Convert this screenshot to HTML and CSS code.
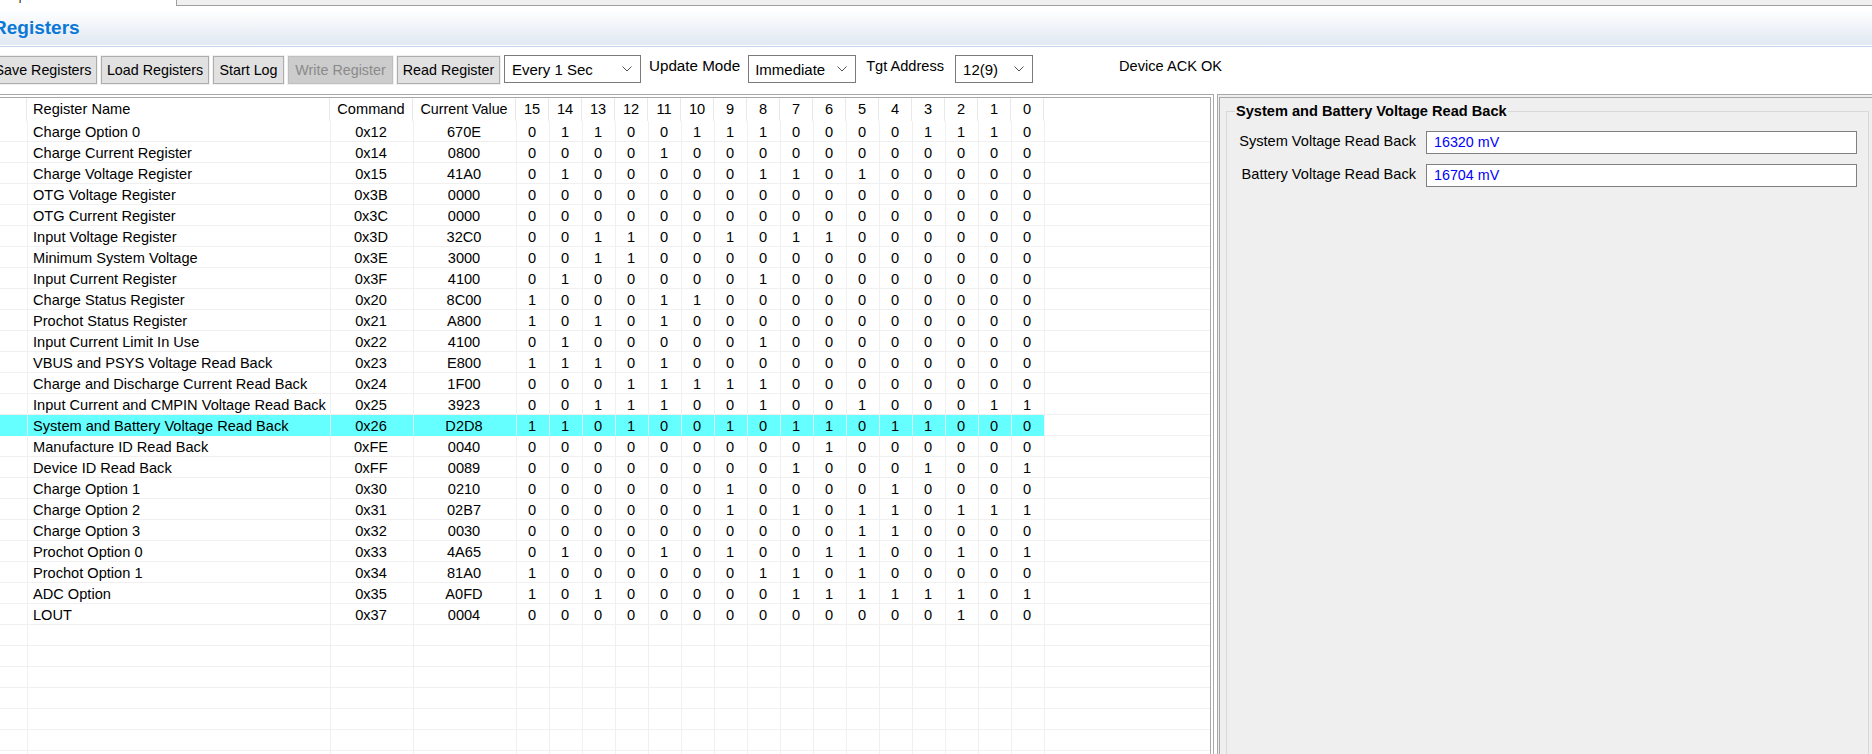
FILE: index.html
```html
<!DOCTYPE html>
<html lang="en">
<head>
<meta charset="utf-8">
<title>Registers</title>
<link rel="stylesheet" href="styles.css">
</head>
<body>
<div class="tabstrip"><div class="tab"><span class="tab-mark"></span></div><div class="tab-rest"></div></div>
<header class="titlebar"><h1 class="title">Registers</h1></header>
<div class="toolbar">
  <button class="btn btn-save">Save Registers</button>
  <button class="btn btn-load">Load Registers</button>
  <button class="btn btn-log">Start Log</button>
  <button class="btn btn-write" disabled>Write Register</button>
  <button class="btn btn-read">Read Register</button>
  <div class="combo combo-rate"><span>Every 1 Sec</span><svg class="chev" viewBox="0 0 10 6"><path d="M.5.5 5 5 9.500.5"/></svg></div>
  <span class="tlabel lbl-mode">Update Mode</span>
  <div class="combo combo-mode"><span>Immediate</span><svg class="chev" viewBox="0 0 10 6"><path d="M.5.5 5 5 9.500.5"/></svg></div>
  <span class="tlabel lbl-addr">Tgt Address</span>
  <div class="combo combo-addr"><span>12(9)</span><svg class="chev" viewBox="0 0 10 6"><path d="M.5.5 5 5 9.500.5"/></svg></div>
  <span class="tlabel lbl-status">Device ACK OK</span>
</div>
<main class="panes">
  <section class="grid-pane">
    <table class="grid">
      <colgroup><col class="c-idx"><col class="c-name"><col class="c-cmd"><col class="c-val"><col class="c-bit"><col class="c-bit"><col class="c-bit"><col class="c-bit"><col class="c-bit"><col class="c-bit"><col class="c-bit"><col class="c-bit"><col class="c-bit"><col class="c-bit"><col class="c-bit"><col class="c-bit"><col class="c-bit"><col class="c-bit"><col class="c-bit"><col class="c-bit"><col></colgroup>
      <thead><tr><th><th class="name">Register Name<th>Command<th class="val-head">Current Value<th>15<th>14<th>13<th>12<th>11<th>10<th>9<th>8<th>7<th>6<th>5<th>4<th>3<th>2<th>1<th>0<th class="fill"></tr></thead>
      <tbody>
        <tr><td><td class="name">Charge Option 0<td>0x12<td>670E<td>0<td>1<td>1<td>0<td>0<td>1<td>1<td>1<td>0<td>0<td>0<td>0<td>1<td>1<td>1<td>0<td class="fill"></tr>
        <tr><td><td class="name">Charge Current Register<td>0x14<td>0800<td>0<td>0<td>0<td>0<td>1<td>0<td>0<td>0<td>0<td>0<td>0<td>0<td>0<td>0<td>0<td>0<td class="fill"></tr>
        <tr><td><td class="name">Charge Voltage Register<td>0x15<td>41A0<td>0<td>1<td>0<td>0<td>0<td>0<td>0<td>1<td>1<td>0<td>1<td>0<td>0<td>0<td>0<td>0<td class="fill"></tr>
        <tr><td><td class="name">OTG Voltage Register<td>0x3B<td>0000<td>0<td>0<td>0<td>0<td>0<td>0<td>0<td>0<td>0<td>0<td>0<td>0<td>0<td>0<td>0<td>0<td class="fill"></tr>
        <tr><td><td class="name">OTG Current Register<td>0x3C<td>0000<td>0<td>0<td>0<td>0<td>0<td>0<td>0<td>0<td>0<td>0<td>0<td>0<td>0<td>0<td>0<td>0<td class="fill"></tr>
        <tr><td><td class="name">Input Voltage Register<td>0x3D<td>32C0<td>0<td>0<td>1<td>1<td>0<td>0<td>1<td>0<td>1<td>1<td>0<td>0<td>0<td>0<td>0<td>0<td class="fill"></tr>
        <tr><td><td class="name">Minimum System Voltage<td>0x3E<td>3000<td>0<td>0<td>1<td>1<td>0<td>0<td>0<td>0<td>0<td>0<td>0<td>0<td>0<td>0<td>0<td>0<td class="fill"></tr>
        <tr><td><td class="name">Input Current Register<td>0x3F<td>4100<td>0<td>1<td>0<td>0<td>0<td>0<td>0<td>1<td>0<td>0<td>0<td>0<td>0<td>0<td>0<td>0<td class="fill"></tr>
        <tr><td><td class="name">Charge Status Register<td>0x20<td>8C00<td>1<td>0<td>0<td>0<td>1<td>1<td>0<td>0<td>0<td>0<td>0<td>0<td>0<td>0<td>0<td>0<td class="fill"></tr>
        <tr><td><td class="name">Prochot Status Register<td>0x21<td>A800<td>1<td>0<td>1<td>0<td>1<td>0<td>0<td>0<td>0<td>0<td>0<td>0<td>0<td>0<td>0<td>0<td class="fill"></tr>
        <tr><td><td class="name">Input Current Limit In Use<td>0x22<td>4100<td>0<td>1<td>0<td>0<td>0<td>0<td>0<td>1<td>0<td>0<td>0<td>0<td>0<td>0<td>0<td>0<td class="fill"></tr>
        <tr><td><td class="name">VBUS and PSYS Voltage Read Back<td>0x23<td>E800<td>1<td>1<td>1<td>0<td>1<td>0<td>0<td>0<td>0<td>0<td>0<td>0<td>0<td>0<td>0<td>0<td class="fill"></tr>
        <tr><td><td class="name">Charge and Discharge Current Read Back<td>0x24<td>1F00<td>0<td>0<td>0<td>1<td>1<td>1<td>1<td>1<td>0<td>0<td>0<td>0<td>0<td>0<td>0<td>0<td class="fill"></tr>
        <tr><td><td class="name">Input Current and CMPIN Voltage Read Back<td>0x25<td>3923<td>0<td>0<td>1<td>1<td>1<td>0<td>0<td>1<td>0<td>0<td>1<td>0<td>0<td>0<td>1<td>1<td class="fill"></tr>
        <tr class="selected"><td><td class="name">System and Battery Voltage Read Back<td>0x26<td>D2D8<td>1<td>1<td>0<td>1<td>0<td>0<td>1<td>0<td>1<td>1<td>0<td>1<td>1<td>0<td>0<td>0<td class="fill"></tr>
        <tr><td><td class="name">Manufacture ID Read Back<td>0xFE<td>0040<td>0<td>0<td>0<td>0<td>0<td>0<td>0<td>0<td>0<td>1<td>0<td>0<td>0<td>0<td>0<td>0<td class="fill"></tr>
        <tr><td><td class="name">Device ID Read Back<td>0xFF<td>0089<td>0<td>0<td>0<td>0<td>0<td>0<td>0<td>0<td>1<td>0<td>0<td>0<td>1<td>0<td>0<td>1<td class="fill"></tr>
        <tr><td><td class="name">Charge Option 1<td>0x30<td>0210<td>0<td>0<td>0<td>0<td>0<td>0<td>1<td>0<td>0<td>0<td>0<td>1<td>0<td>0<td>0<td>0<td class="fill"></tr>
        <tr><td><td class="name">Charge Option 2<td>0x31<td>02B7<td>0<td>0<td>0<td>0<td>0<td>0<td>1<td>0<td>1<td>0<td>1<td>1<td>0<td>1<td>1<td>1<td class="fill"></tr>
        <tr><td><td class="name">Charge Option 3<td>0x32<td>0030<td>0<td>0<td>0<td>0<td>0<td>0<td>0<td>0<td>0<td>0<td>1<td>1<td>0<td>0<td>0<td>0<td class="fill"></tr>
        <tr><td><td class="name">Prochot Option 0<td>0x33<td>4A65<td>0<td>1<td>0<td>0<td>1<td>0<td>1<td>0<td>0<td>1<td>1<td>0<td>0<td>1<td>0<td>1<td class="fill"></tr>
        <tr><td><td class="name">Prochot Option 1<td>0x34<td>81A0<td>1<td>0<td>0<td>0<td>0<td>0<td>0<td>1<td>1<td>0<td>1<td>0<td>0<td>0<td>0<td>0<td class="fill"></tr>
        <tr><td><td class="name">ADC Option<td>0x35<td>A0FD<td>1<td>0<td>1<td>0<td>0<td>0<td>0<td>0<td>1<td>1<td>1<td>1<td>1<td>1<td>0<td>1<td class="fill"></tr>
        <tr><td><td class="name">LOUT<td>0x37<td>0004<td>0<td>0<td>0<td>0<td>0<td>0<td>0<td>0<td>0<td>0<td>0<td>0<td>0<td>1<td>0<td>0<td class="fill"></tr>
        <tr><td><td><td><td><td><td><td><td><td><td><td><td><td><td><td><td><td><td><td><td><td class="fill"></tr>
        <tr><td><td><td><td><td><td><td><td><td><td><td><td><td><td><td><td><td><td><td><td><td class="fill"></tr>
        <tr><td><td><td><td><td><td><td><td><td><td><td><td><td><td><td><td><td><td><td><td><td class="fill"></tr>
        <tr><td><td><td><td><td><td><td><td><td><td><td><td><td><td><td><td><td><td><td><td><td class="fill"></tr>
        <tr><td><td><td><td><td><td><td><td><td><td><td><td><td><td><td><td><td><td><td><td><td class="fill"></tr>
        <tr><td><td><td><td><td><td><td><td><td><td><td><td><td><td><td><td><td><td><td><td><td class="fill"></tr>
        <tr><td><td><td><td><td><td><td><td><td><td><td><td><td><td><td><td><td><td><td><td><td class="fill"></tr>
      </tbody>
    </table>
  </section>
  <aside class="detail-pane">
    <fieldset class="group">
      <legend class="group-title">System and Battery Voltage Read Back</legend>
      <div class="fields">
        <label class="field-label">System Voltage Read Back</label><div class="field-value">16320 mV</div>
        <label class="field-label">Battery Voltage Read Back</label><div class="field-value">16704 mV</div>
      </div>
    </fieldset>
  </aside>
</main>
</body>
</html>
```
FILE: styles.css
```css
* { box-sizing: border-box; }
html, body { margin: 0; padding: 0; }
body {
  width: 1872px;
  height: 754px;
  overflow: hidden;
  background: #fff;
  color: #000;
  font: 14.6px/1.2 "Liberation Sans", Arial, sans-serif;
}

/* top tab strip */
.tabstrip { display: flex; height: 6px; }
.tab { width: 176px; background: #fff; }
.tab-mark { display: block; width: 2px; height: 3px; margin-left: 19px; background: #e0953a; border-right: 1px solid #3a78c0; }
.tab-rest { flex: 1; background: #f0f0f0; border-left: 1px solid #a0a0a0; border-bottom: 1px solid #a0a0a0; }

/* title band */
.titlebar {
  height: 41px;
  padding-top: 4px;
  display: flex;
  align-items: center;
  background: linear-gradient(#fff 10%, #e3eaf3 90%);
  border-bottom: 1px solid #c6d6ec;
  box-shadow: inset 0 -1px 0 #fff;
}
.title { margin: 0 0 0 -7px; font-size: 19px; font-weight: 700; color: #0a78d7; }

/* toolbar */
.toolbar {
  height: 47px;
  margin-left: -11px;
  padding-top: 9px;
  display: flex;
  align-items: flex-start;
  gap: 4px;
}
.btn {
  height: 28px;
  padding: 2px 0 0;
  background: #e1e1e1;
  border: 1px solid #adadad;
  box-shadow: 0 0 0 1px #f0f0f0;
  font: inherit;
  font-size: 14.3px;
  color: #000;
  white-space: nowrap;
}
.btn:disabled { background: #cccccc; border-color: #bfbfbf; color: #8a8a8a; }
.btn-save { width: 108px; }
.btn-load { width: 108px; }
.btn-log { width: 71px; }
.btn-write { width: 105px; }
.btn-read { width: 103px; }

.combo {
  height: 28px;
  margin-top: -1px;
  padding: 0 8px 0 6px;
  display: flex;
  align-items: center;
  justify-content: space-between;
  background: #fff;
  border: 1px solid #7a7a7a;
  font-size: 15px;
}
.combo span { padding-top: 1px; }
.combo-rate { width: 137px; padding-left: 7px; }
.combo-mode { width: 108px; margin-left: 4px; }
.combo-addr { width: 78px; margin-left: 7px; padding-left: 7px; }
.chev { width: 10px; height: 6px; fill: none; stroke: #555; stroke-width: 1; }

.tlabel { height: 22px; margin-top: -1px; line-height: 22px; white-space: nowrap; }
.lbl-mode { margin-left: 4px; font-size: 15.2px; }
.lbl-addr { margin-left: 6px; }
.lbl-status { margin-left: 82px; }

/* panes */
.panes { display: flex; height: 660px; }
.grid-pane {
  width: 1214px;
  overflow: hidden;
  background: #fff;
  border-top: 4px double #a8a8a8;
  border-right: 4px double #a8a8a8;
}
.detail-pane {
  flex: 1;
  margin-left: 3px;
  padding: 5px 3px 0 6px;
  background: #efefef;
  border-top: 4px double #a8a8a8;
  border-left: 3px double #a8a8a8;
}

/* grid */
.grid { width: 1210px; table-layout: fixed; border-collapse: separate; border-spacing: 0; }
.c-idx { width: 27px; }
.c-name { width: 303px; }
.c-cmd { width: 83px; }
.c-val { width: 103px; }
.c-bit { width: 33px; }
.grid th, .grid td {
  padding: 0;
  font-weight: 400;
  text-align: center;
  white-space: nowrap;
  overflow: hidden;
}
.grid td {
  height: 21px;
  padding: 3px 2px 0 0;
  line-height: 17px;
  border-left: 1px solid #f0f0f0;
  border-bottom: 1px solid #f0f0f0;
}
.grid td:first-child { border-left: 0; }
.grid th { height: 23px; border-right: 1px solid #e8e8e8; }
.grid .val-head { font-size: 14.3px; }
.grid .name { padding-left: 5px; padding-right: 0; text-align: left; }
.grid th.name { padding-left: 6px; }
.grid th.fill { border-right: 0; }
.selected td { background: #66ffff; border-left-color: #d8ffff; border-bottom-color: #66ffff; }
.selected td.fill { background: #fff; border-bottom-color: #f0f0f0; border-left-color: #f0f0f0; }

/* detail group */
.group {
  margin: 0;
  padding: 0;
  height: 700px;
  min-width: 0;
  border: 1px solid #d8d8d8;
}
.group-title { margin-left: 8px; padding: 0 1px; font-weight: 700; }
.fields {
  display: grid;
  grid-template-columns: 189px 431px;
  column-gap: 10px;
  row-gap: 10px;
  align-items: center;
  padding-top: 10px;
}
.field-label { text-align: right; white-space: nowrap; }
.field-value {
  height: 23px;
  padding-left: 7px;
  font-size: 14.3px;
  line-height: 21px;
  color: #0000ff;
  background: #fff;
  border: 1px solid #808080;
}
```
